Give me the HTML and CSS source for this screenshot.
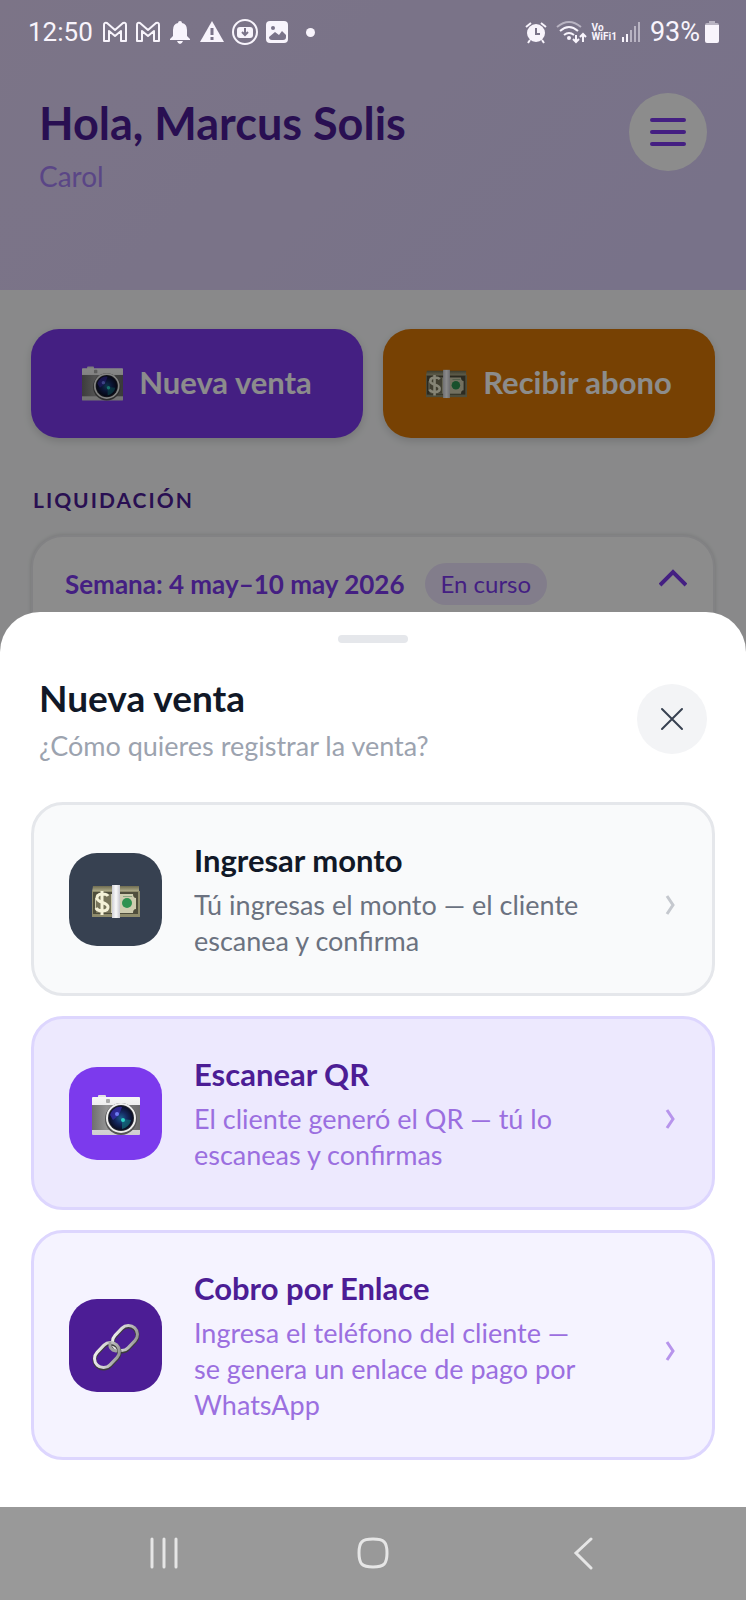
FILE: index.html
```html
<!DOCTYPE html>
<html lang="es">
<head>
    <meta charset="UTF-8">
    <meta name="viewport" content="width=device-width, initial-scale=1.0">
    <title>Nueva venta</title>
    <link rel="stylesheet" href="styles.css">
</head>
<body>
    <!-- Shared icons -->
    <svg class="sprite" aria-hidden="true">
        <defs>
            <linearGradient id="camBody" x1="0" y1="0" x2="1" y2="0">
                <stop offset="0" stop-color="#6f6f6f"/>
                <stop offset="0.3" stop-color="#949494"/>
                <stop offset="1" stop-color="#6a6a6a"/>
            </linearGradient>
            <linearGradient id="camTop" x1="0" y1="0" x2="0" y2="1">
                <stop offset="0" stop-color="#f6f6f6"/>
                <stop offset="1" stop-color="#cfcfcf"/>
            </linearGradient>
            <radialGradient id="camLens" cx="0.5" cy="0.5" r="0.5">
                <stop offset="0" stop-color="#1c5f8c"/>
                <stop offset="0.5" stop-color="#14275f"/>
                <stop offset="1" stop-color="#0b0d24"/>
            </radialGradient>
            <linearGradient id="chainMetal" x1="0" y1="0" x2="1" y2="1">
                <stop offset="0" stop-color="#f4f4f4"/>
                <stop offset="0.5" stop-color="#cccccc"/>
                <stop offset="1" stop-color="#8a8a8a"/>
            </linearGradient>
            <linearGradient id="billTop" x1="0" y1="0" x2="0" y2="1">
                <stop offset="0" stop-color="#6f6c50"/>
                <stop offset="1" stop-color="#b9b693"/>
            </linearGradient>
            <linearGradient id="billBand" x1="0" y1="0" x2="1" y2="0">
                <stop offset="0" stop-color="#cfcfd6"/>
                <stop offset="0.5" stop-color="#fafafa"/>
                <stop offset="1" stop-color="#c8c8cf"/>
            </linearGradient>
        </defs>
        <symbol id="icon-camera" viewBox="0 0 48 48">
            <rect x="6" y="4" width="8" height="4" rx="1" fill="#e3e3e3"/>
            <rect x="0" y="6" width="48" height="38" rx="1" fill="url(#camTop)"/>
            <rect x="0" y="14" width="48" height="25" fill="url(#camBody)"/>
            <rect x="14" y="8" width="4" height="4" rx="1" fill="#a9a9a9"/>
            <circle cx="29" cy="28" r="16" fill="#555555"/>
            <circle cx="29" cy="27" r="15" fill="#efefef"/>
            <circle cx="29" cy="27" r="13" fill="#22252e"/>
            <circle cx="29" cy="27" r="12" fill="url(#camLens)"/>
            <path d="M18 24c2-6 7-9 12-8l-3 8-6 5z" fill="#3b2fb4" opacity="0.7"/>
            <path d="M30 28l9 1c-1 5-5 8-9 9z" fill="#147f86" opacity="0.6"/>
            <circle cx="25" cy="23" r="2" fill="#6f7cf2"/>
            <circle cx="31" cy="29" r="2" fill="#2fd0c5"/>
        </symbol>
        <symbol id="icon-money" viewBox="0 0 48 48">
            <path d="M1 9h46v6H0z" fill="url(#billTop)"/>
            <rect x="0" y="14" width="48" height="26" fill="#8f8c6c"/>
            <rect x="1" y="15" width="45" height="22" fill="#4f4e3c"/>
            <path d="M6 17h35q0 4 3 4v11q-3 0-3 4H6q0-4-3-4V21q3 0 3-4z" fill="#cfcdb0"/>
            <path d="M4 17h15v19H4z" fill="#77745a"/>
            <path d="M16 19c-2-3-11-3-11 2s11 4 11 9-10 5-12 1M10 14v24" fill="none" stroke="#f5f2d8" stroke-width="3"/>
            <circle cx="35" cy="26" r="5" fill="#2f9250"/>
            <rect x="31" y="19" width="9" height="1" fill="#8ca681"/>
            <rect x="20" y="8" width="8" height="33" fill="url(#billBand)"/>
        </symbol>
        <symbol id="icon-link" viewBox="0 0 48 48">
            <g fill="none">
                <rect x="19" y="7" width="28" height="18" rx="9" transform="rotate(-46 33 16)" stroke="#3c3c3c" stroke-width="4"/>
                <rect x="19" y="6" width="28" height="18" rx="9" transform="rotate(-46 33 15)" stroke="url(#chainMetal)" stroke-width="3"/>
                <rect x="1" y="24" width="28" height="18" rx="9" transform="rotate(-46 15 33)" stroke="#3c3c3c" stroke-width="4"/>
                <rect x="1" y="23" width="28" height="18" rx="9" transform="rotate(-46 15 32)" stroke="url(#chainMetal)" stroke-width="3"/>
                <path d="M18 20q-1 7 6 8" stroke="#a0a0a0" stroke-width="3" stroke-linecap="round"/>
            </g>
        </symbol>
        <symbol id="icon-mail" viewBox="0 0 26 22">
            <path d="M2 20V4q0-3 3-2l8 7 8-7q3-1 3 2v16h-5V10l-6 5-6-5v10z" fill="none" stroke="currentColor" stroke-width="2" stroke-linejoin="round"/>
        </symbol>
        <symbol id="icon-chevron" viewBox="0 0 12 20">
            <path d="M2 1l6 9-6 9" fill="none" stroke="currentColor" stroke-width="3"/>
        </symbol>
    </svg>

    <div class="screen">
        <!-- Home -->
        <div class="home">
            <header class="home-header">
                <div>
                    <h1 class="greeting">Hola, Marcus Solis</h1>
                    <p class="store">Carol</p>
                </div>
                <button class="menu-button" aria-label="Menú">
                    <svg width="36" height="28" viewBox="0 0 36 28" stroke="currentColor" stroke-width="4" stroke-linecap="round">
                        <path d="M2 2h32M2 14h32M2 26h32"/>
                    </svg>
                </button>
            </header>

            <main class="home-content">
                <div class="actions">
                    <button class="action action-sale">
                        <svg class="action-icon"><use href="#icon-camera"/></svg>
                        <span class="action-label">Nueva venta</span>
                    </button>
                    <button class="action action-payment">
                        <svg class="action-icon"><use href="#icon-money"/></svg>
                        <span class="action-label">Recibir abono</span>
                    </button>
                </div>

                <h2 class="section-title">LIQUIDACIÓN</h2>
                <section class="week-card">
                    <span class="week-name">Semana: 4 may–10 may 2026</span>
                    <span class="badge">En curso</span>
                    <button class="collapse-button" aria-label="Contraer">
                        <svg width="28" height="18" viewBox="0 0 28 18" fill="none" stroke="currentColor" stroke-width="4">
                            <path d="M1 16L14 3l13 13"/>
                        </svg>
                    </button>
                </section>
            </main>
        </div>

        <!-- Bottom sheet -->
        <div class="backdrop">
            <div class="sheet" role="dialog" aria-labelledby="sheetTitle">
                <div class="sheet-handle"></div>
                <div class="sheet-header">
                    <div>
                        <h2 class="sheet-title" id="sheetTitle">Nueva venta</h2>
                        <p class="sheet-subtitle">¿Cómo quieres registrar la venta?</p>
                    </div>
                    <button class="close-button" aria-label="Cerrar">
                        <svg width="24" height="24" viewBox="0 0 24 24" stroke="currentColor" stroke-width="2" stroke-linecap="round">
                            <path d="M2 2l20 20M22 2L2 22"/>
                        </svg>
                    </button>
                </div>

                <div class="options">
                    <button class="option option-amount">
                        <span class="option-icon"><svg><use href="#icon-money"/></svg></span>
                        <span class="option-text">
                            <span class="option-title">Ingresar monto</span>
                            <span class="option-desc">Tú ingresas el monto — el cliente escanea y confirma</span>
                        </span>
                        <svg class="option-chevron"><use href="#icon-chevron"/></svg>
                    </button>
                    <button class="option option-qr">
                        <span class="option-icon"><svg><use href="#icon-camera"/></svg></span>
                        <span class="option-text">
                            <span class="option-title">Escanear QR</span>
                            <span class="option-desc">El cliente generó el QR — tú lo escaneas y confirmas</span>
                        </span>
                        <svg class="option-chevron"><use href="#icon-chevron"/></svg>
                    </button>
                    <button class="option option-link">
                        <span class="option-icon"><svg><use href="#icon-link"/></svg></span>
                        <span class="option-text">
                            <span class="option-title">Cobro por Enlace</span>
                            <span class="option-desc">Ingresa el teléfono del cliente — se genera un enlace de pago por WhatsApp</span>
                        </span>
                        <svg class="option-chevron"><use href="#icon-chevron"/></svg>
                    </button>
                </div>
            </div>
        </div>

        <!-- Status bar -->
        <div class="status-bar">
            <div class="status-left">
                <span class="clock">12:50</span>
                <svg width="26" height="22"><use href="#icon-mail"/></svg>
                <svg width="26" height="22"><use href="#icon-mail"/></svg>
                <svg width="24" height="24" viewBox="0 0 24 24" fill="currentColor">
                    <path d="M12 1q2 0 2 2 5 1 5 7v6l3 3v1H2v-1l3-3v-6q0-6 5-7 0-2 2-2zM9 21h6q-1 3-3 3t-3-3z"/>
                </svg>
                <svg width="26" height="24" viewBox="0 0 26 24">
                    <path d="M13 1l12 21H1z" fill="currentColor"/>
                    <path d="M13 8v7M13 17v3" stroke="#7a7389" stroke-width="3"/>
                </svg>
                <svg width="26" height="26" viewBox="0 0 26 26">
                    <circle cx="13" cy="13" r="12" fill="none" stroke="currentColor" stroke-width="2"/>
                    <rect x="5" y="8" width="16" height="11" rx="3" fill="currentColor"/>
                    <path d="M13 9v7M10 13l3 3 3-3" fill="none" stroke="#7a7389" stroke-width="2"/>
                </svg>
                <svg width="24" height="24" viewBox="0 0 24 24">
                    <rect x="1" y="1" width="22" height="22" rx="4" fill="currentColor"/>
                    <circle cx="8" cy="8" r="2" fill="#7a7389"/>
                    <path d="M4 17l6-5 4 3 3-4 4 4v2q0 3-3 3H7q-3 0-3-3z" fill="#7a7389"/>
                </svg>
                <span class="status-dot"></span>
            </div>
            <div class="status-right">
                <svg class="alarm" width="22" height="24" viewBox="0 0 22 24">
                    <circle cx="11" cy="13" r="9" fill="currentColor"/>
                    <path d="M1 7l5-4M21 7l-5-4M5 20l-2 3M17 20l2 3" stroke="currentColor" stroke-width="2"/>
                    <path d="M11 8v6h4" fill="none" stroke="#7a7389" stroke-width="2"/>
                </svg>
                <svg width="32" height="24" viewBox="0 0 32 24" fill="none" stroke="currentColor" stroke-width="2">
                    <path d="M1 7q12-10 24 0" opacity="0.5"/>
                    <path d="M4 11q9-8 18 0M8 15q5-4 10 0"/>
                    <circle cx="13" cy="18" r="2" fill="currentColor" stroke="none"/>
                    <path d="M20 15v7M17 19l3 3 3-3M27 22v-8M24 17l3-3 3 3"/>
                </svg>
                <span class="carrier"><span>Vo</span><span>WiFi1</span></span>
                <svg class="signal" width="20" height="22" viewBox="0 0 20 22" fill="currentColor">
                    <path d="M1 16h2v5H1zM5 13h2v8H5z"/>
                    <path d="M9 9h2v12H9zM13 5h2v16h-2zM17 1h2v20h-2z" opacity="0.5"/>
                </svg>
                <span>93%</span>
                <svg width="16" height="24" viewBox="0 0 16 24" fill="currentColor">
                    <path d="M5 1h6v2h2q2 0 2 2H1q0-2 2-2h2z" opacity="0.5"/>
                    <path d="M1 5h14v16q0 2-2 2H3q-2 0-2-2z"/>
                </svg>
            </div>
        </div>
    </div>

    <!-- System navigation -->
    <nav class="system-nav">
        <button aria-label="Recientes">
            <svg width="32" height="34" viewBox="0 0 32 34" stroke="currentColor" stroke-width="3" stroke-linecap="round">
                <path d="M4 2v28M16 2v28M28 2v28"/>
            </svg>
        </button>
        <button aria-label="Inicio">
            <svg width="32" height="34" viewBox="0 0 32 34" fill="none" stroke="currentColor" stroke-width="3">
                <path d="M16 2c11 0 14 3 14 14s-3 14-14 14S2 27 2 16 5 2 16 2z"/>
            </svg>
        </button>
        <button aria-label="Atrás">
            <svg width="32" height="34" viewBox="0 0 32 34" fill="none" stroke="currentColor" stroke-width="3" stroke-linecap="round">
                <path d="M25 2L10 16l15 15"/>
            </svg>
        </button>
    </nav>
</body>
</html>
```

FILE: styles.css
```css
* {
    box-sizing: border-box;
}
body {
    margin: 0;
    min-height: 100vh;
    display: flex;
    flex-direction: column;
    font-family: Lato, "Open Sans", sans-serif;
    background: #ffffff;
}
h1, h2, p {
    margin: 0;
}
button {
    border: none;
    padding: 0;
    font-family: inherit;
    cursor: pointer;
}
svg {
    display: block;
    flex-shrink: 0;
}
.sprite {
    position: absolute;
    width: 0;
    height: 0;
}
.screen {
    position: relative;
    flex: 1;
    overflow: hidden;
    background: #f9fafb;
}

/* Status bar */
.status-bar {
    position: absolute;
    top: 0;
    left: 0;
    right: 0;
    height: 64px;
    padding: 0 26px 0 28px;
    display: flex;
    align-items: center;
    justify-content: space-between;
    color: #f8f4fc;
    font-family: Roboto, sans-serif;
    font-size: 27px;
}
.status-left, .status-right {
    display: flex;
    align-items: center;
}
.status-left {
    gap: 7px;
}
.status-right {
    gap: 4px;
}
.clock {
    margin-right: 2px;
    font-size: 26px;
}
.status-dot {
    width: 9px;
    height: 9px;
    margin-left: 10px;
    border-radius: 50%;
    background: currentColor;
}
.alarm, .signal {
    margin-right: 5px;
}
.carrier {
    display: flex;
    flex-direction: column;
    font-size: 10px;
    line-height: 9px;
    font-weight: 700;
}

/* Home */
.home-header {
    height: 290px;
    padding: 93px 39px 0;
    display: flex;
    align-items: flex-start;
    justify-content: space-between;
    background: linear-gradient(135deg, #e2d4f6, #dacffa);
}
.greeting {
    font-size: 45px;
    line-height: 60px;
    font-weight: 700;
    color: #4c1d95;
}
.store {
    font-size: 28px;
    line-height: 46px;
    color: #a480f5;
}
.menu-button {
    width: 78px;
    height: 78px;
    display: grid;
    place-items: center;
    border-radius: 50%;
    background: #ffffff;
    color: #7c3aed;
}
.home-content {
    padding: 39px 31px;
}
.actions {
    display: grid;
    grid-template-columns: 1fr 1fr;
    gap: 20px;
}
.action {
    height: 109px;
    display: flex;
    align-items: center;
    justify-content: center;
    gap: 16px;
    border-radius: 28px;
    color: #ffffff;
    font-size: 31px;
    font-weight: 700;
    box-shadow: 0 3px 8px rgba(0, 0, 0, 0.15);
}
.action-icon {
    width: 41px;
    height: 41px;
}
.action-label {
    padding-bottom: 4px;
}
.action-sale {
    background: #7c3aed;
}
.action-payment {
    background: #d97706;
}
.section-title {
    margin: 45px 2px 18px;
    font-size: 21px;
    line-height: 34px;
    font-weight: 700;
    letter-spacing: 2px;
    color: #4c1d95;
}
.week-card {
    height: 160px;
    padding: 26px 26px 0 32px;
    display: flex;
    align-items: flex-start;
    gap: 20px;
    border: 2px solid #ededf0;
    border-radius: 32px;
    background: #ffffff;
    color: #7c3aed;
    box-shadow: 0 0 4px rgba(0, 0, 0, 0.15);
}
.week-name {
    font-size: 26px;
    line-height: 42px;
    font-weight: 700;
}
.badge {
    padding: 0 16px;
    border-radius: 21px;
    background: #ede4fe;
    font-size: 24px;
    line-height: 42px;
}
.collapse-button {
    margin-left: auto;
    padding: 6px 0;
    background: none;
    color: inherit;
}

/* Bottom sheet */
.backdrop {
    position: absolute;
    inset: 0;
    display: flex;
    flex-direction: column;
    justify-content: flex-end;
    background: rgba(0, 0, 0, 0.45);
}
.sheet {
    padding: 23px 31px 47px;
    border-radius: 40px 40px 0 0;
    background: #ffffff;
}
.sheet-handle {
    width: 70px;
    height: 8px;
    margin: 0 auto 29px;
    border-radius: 4px;
    background: #e5e7eb;
}
.sheet-header {
    display: flex;
    align-items: flex-start;
    justify-content: space-between;
    padding: 0 8px;
    margin-bottom: 38px;
}
.sheet-title {
    margin-bottom: 4px;
    font-size: 37px;
    line-height: 52px;
    font-weight: 700;
    color: #111827;
}
.sheet-subtitle {
    font-size: 27px;
    line-height: 36px;
    color: #9ca3af;
}
.close-button {
    width: 70px;
    height: 70px;
    margin-top: 12px;
    display: grid;
    place-items: center;
    border-radius: 50%;
    background: #f3f4f6;
    color: #374151;
}
.options {
    display: flex;
    flex-direction: column;
    gap: 20px;
}
.option {
    display: flex;
    align-items: center;
    padding: 34px 35px;
    border: 3px solid #ddd6fe;
    border-radius: 32px;
    text-align: left;
}
.option-icon {
    flex-shrink: 0;
    width: 93px;
    height: 93px;
    padding-top: 4px;
    display: grid;
    place-items: center;
    border-radius: 28px;
}
.option-icon svg {
    width: 48px;
    height: 48px;
}
.option-text {
    flex: 1;
    padding: 0 75px 0 32px;
}
.option-title {
    display: block;
    margin-bottom: 6px;
    font-size: 31px;
    line-height: 42px;
    font-weight: 700;
    color: #4c1d95;
}
.option-desc {
    display: block;
    font-size: 27px;
    line-height: 36px;
    color: #9b6fe0;
}
.option-chevron {
    width: 12px;
    height: 20px;
    margin-top: 12px;
    color: #b794ec;
}
.option-amount {
    background: #f9fafb;
    border-color: #e5e7eb;
}
.option-amount .option-icon {
    background: #374151;
}
.option-amount .option-title {
    color: #111827;
}
.option-amount .option-desc {
    color: #6b7280;
}
.option-amount .option-chevron {
    color: #c5c8ce;
}
.option-qr {
    background: #ede9fe;
}
.option-qr .option-icon {
    background: #7c3aed;
}
.option-link {
    background: #f5f3ff;
}
.option-link .option-icon {
    background: #4c1d95;
}

/* System navigation */
.system-nav {
    height: 93px;
    padding: 0 60px;
    display: grid;
    grid-template-columns: repeat(3, 1fr);
    place-items: center;
    background: #999999;
}
.system-nav button {
    background: none;
    color: #e6e6e6;
}
```
